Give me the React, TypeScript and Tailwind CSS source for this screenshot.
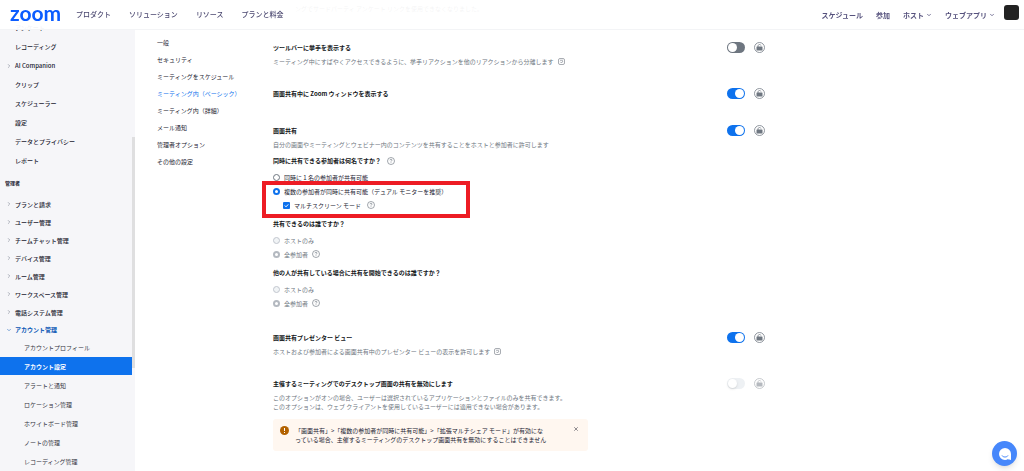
import clsx from 'clsx';
import { ChevronDown, ChevronRight, X } from 'lucide-react';
import type { ReactNode } from 'react';

const productLinks = ['プロダクト', 'ソリューション', 'リソース', 'プランと料金'];

const accountLinks = [
  { name: 'スケジュール' },
  { name: '参加' },
  { name: 'ホスト', menu: true },
  { name: 'ウェブアプリ', menu: true },
];

const personalLinks = [
  { name: 'アンケート' },
  { name: 'レコーディング' },
  { name: 'AI Companion', group: true },
  { name: 'クリップ' },
  { name: 'スケジューラー' },
  { name: '設定' },
  { name: 'データとプライバシー' },
  { name: 'レポート' },
];

const adminLinks = [
  'プランと請求',
  'ユーザー管理',
  'チームチャット管理',
  'デバイス管理',
  'ルーム管理',
  'ワークスペース管理',
  '電話システム管理',
];

const manageLinks = [
  'アカウントプロフィール',
  'アカウント設定',
  'アラートと通知',
  'ロケーション管理',
  'ホワイトボード管理',
  'ノートの管理',
  'レコーディング管理',
];

const sectionLinks = [
  '一般',
  'セキュリティ',
  'ミーティングをスケジュール',
  'ミーティング内（ベーシック）',
  'ミーティング内（詳細）',
  'メール通知',
  '管理者オプション',
  'その他の設定',
];

function Header() {
  return (
    <header className="fixed inset-x-0 top-0 z-10 flex h-[30px] items-center border-b border-gray-100 bg-white/95 pl-[10px] pr-[5px] text-[7px] leading-3">
      <a
        href="#"
        className="mr-4 w-[50px] pb-[3px] font-['Lato'] text-[21px] font-bold leading-6 text-[#0b5cff]"
      >
        zoom
      </a>
      <nav className="flex gap-[18px] pb-[2px] font-medium text-[#4b4870]">
        {productLinks.map((name) => (
          <a key={name} href="#">
            {name}
          </a>
        ))}
      </nav>
      <nav className="ml-auto flex gap-[13px] font-bold text-[#56527d]">
        {accountLinks.map((link) => (
          <a key={link.name} href="#" className="flex items-center gap-[2px]">
            {link.name}
            {link.menu && <ChevronDown className="size-[6px]" strokeWidth={3} />}
          </a>
        ))}
      </nav>
      <button
        type="button"
        aria-label="プロフィール"
        className="mb-1 ml-[9px] size-[15px] rounded-[3px] bg-[#222222]"
      />
    </header>
  );
}

function Sidebar() {
  return (
    <aside className="relative w-[135px] flex-none bg-[#f6f6f9] pt-[18px] font-medium text-[#222230]">
      <ul>
        {personalLinks.map((link) => (
          <li key={link.name} className="relative">
            <a href="#" className="flex h-[19px] items-center pl-[15px]">
              {link.group && (
                <ChevronRight className="absolute left-[6px] size-[6px] text-gray-500" />
              )}
              {link.name}
            </a>
          </li>
        ))}
      </ul>
      <h2 className="flex h-[25px] items-center pl-[5px] text-[5px] font-bold">
        管理者
      </h2>
      <ul>
        {adminLinks.map((name) => (
          <li key={name} className="relative">
            <a href="#" className="flex h-[18px] items-center pl-[15px]">
              <ChevronRight className="absolute left-[6px] size-[6px] text-gray-500" />
              {name}
            </a>
          </li>
        ))}
        <li className="relative">
          <a
            href="#"
            className="relative flex h-[17px] items-center pl-[15px] font-bold text-[#0956b5]"
          >
            <ChevronDown className="absolute left-[6px] size-[6px]" />
            アカウント管理
          </a>
          <ul className="flex flex-col gap-px">
            {manageLinks.map((name) => (
              <li key={name}>
                <a
                  href="#"
                  className={clsx(
                    'mr-[3px] flex h-[18px] items-center pl-6',
                    name === 'アカウント設定'
                      ? 'bg-[#0e72ed] font-bold text-white'
                      : 'font-normal text-[#333340]'
                  )}
                >
                  {name}
                </a>
              </li>
            ))}
          </ul>
        </li>
      </ul>
      <div className="absolute right-0 top-[137px] h-[231px] w-[3px] bg-[#dfdfe0]" />
    </aside>
  );
}

function SectionNav() {
  return (
    <nav className="w-[138px] flex-none pl-[22px] pt-[34px] text-[#222230]">
      {sectionLinks.map((name) => (
        <a
          key={name}
          href="#"
          className={clsx(
            'flex h-[17px] items-center whitespace-nowrap',
            name === 'ミーティング内（ベーシック）' && 'text-[#0e72ed]'
          )}
        >
          {name}
        </a>
      ))}
    </nav>
  );
}

function HelpIcon() {
  return (
    <svg viewBox="0 0 16 16" className="size-[8px] flex-none text-[#6e7680]">
      <circle cx="8" cy="8" r="7" fill="none" stroke="currentColor" strokeWidth="1.3" />
      <path
        d="M6 6.500c0-1.200.9-2 2-2s2 .8 2 1.800c0 1.400-2 1.500-2 2.900M8 10.500v1.300"
        fill="none"
        stroke="currentColor"
        strokeWidth="1.3"
      />
    </svg>
  );
}

function ModifiedIcon() {
  return (
    <svg
      viewBox="0 0 14 14"
      className="ml-1 inline size-[7px] align-[-1px] text-[#6e7680]"
      fill="none"
      stroke="currentColor"
      strokeWidth="1.2"
    >
      <rect x="1" y="1" width="12" height="12" rx="3" />
      <path d="M4 4.500h6M4.500 7.500l2.500 2.500 3-4" />
    </svg>
  );
}

function LockIcon() {
  return (
    <svg viewBox="0 0 22 22" className="size-[11px]">
      <circle cx="11" cy="11" r="10" fill="none" stroke="#6e7680" strokeWidth="1.5" />
      <rect x="5" y="9" width="12" height="8" rx="1" fill="#6e7680" />
      <path
        d="M8 10V8c0-1.800 1.300-3 3-3 1.500 0 2.600.8 2.900 2"
        fill="none"
        stroke="#6e7680"
        strokeWidth="1.5"
      />
    </svg>
  );
}

interface SettingProps {
  title: string;
  checked?: boolean;
  disabled?: boolean;
  className?: string;
  children?: ReactNode;
}

function Setting({ title, checked, disabled, className, children }: SettingProps) {
  return (
    <section className={clsx('flex items-start justify-between', className)}>
      <div>
        <h3 className="font-bold leading-3 text-[#131619]">{title}</h3>
        {children}
      </div>
      <div className="flex gap-[9px]">
        <input
          type="checkbox"
          role="switch"
          aria-label={title}
          defaultChecked={checked}
          disabled={disabled}
          className="flex h-[11px] w-[18px] appearance-none items-center rounded-full bg-[#6e7680] p-px before:size-[9px] before:rounded-full before:bg-white checked:justify-end checked:bg-[#0e72ed] disabled:bg-[#eef1f4] disabled:before:shadow-sm"
        />
        <button
          type="button"
          aria-label="ロック"
          disabled={disabled}
          className="disabled:opacity-50"
        >
          <LockIcon />
        </button>
      </div>
    </section>
  );
}

function Description({ children }: { children: ReactNode }) {
  return <p className="mt-[3px] leading-[9px] text-[#6e7680]">{children}</p>;
}

interface OptionProps {
  name: string;
  label: string;
  checked?: boolean;
  disabled?: boolean;
  help?: boolean;
}

function Option({ name, label, checked, disabled, help }: OptionProps) {
  return (
    <div className="flex h-[14px] items-center gap-1">
      <label
        className={clsx(
          'flex items-center gap-1',
          disabled ? 'text-[#6e7680]' : 'text-[#222230]'
        )}
      >
        <input
          type="radio"
          name={name}
          defaultChecked={checked}
          disabled={disabled}
          className="size-[7px] appearance-none rounded-full border border-[#6e7680] bg-white checked:border-2 checked:border-[#0e72ed] disabled:border-[#c1c6ce] disabled:bg-[#f1f4f6] disabled:checked:border-[#b4b9c0] disabled:checked:bg-white"
        />
        {label}
      </label>
      {help && <HelpIcon />}
    </div>
  );
}

interface QuestionProps {
  title: string;
  help?: boolean;
  children: ReactNode;
}

function Question({ title, help, children }: QuestionProps) {
  return (
    <fieldset className="mt-[6px]">
      <legend className="flex items-center gap-[6px] font-bold leading-3 text-[#131619]">
        {title}
        {help && <HelpIcon />}
      </legend>
      <div className="mt-[3px]">{children}</div>
    </fieldset>
  );
}

function Settings() {
  return (
    <main className="flex min-w-0 max-w-[492px] flex-1 flex-col gap-[22px] pt-1">
      <p className="pb-[7px] pl-[22px] leading-[9px] text-[#222230]">
        ングでサードパーティ アンケート リンクを使用できなくなりました。
      </p>
      <Setting title="ツールバーに挙手を表示する">
        <Description>
          ミーティング中にすばやくアクセスできるように、挙手リアクションを他のリアクションから分離します
          <ModifiedIcon />
        </Description>
      </Setting>
      <Setting
        title="画面共有中に Zoom ウィンドウを表示する"
        checked
        className="pb-[3px]"
      />
      <Setting title="画面共有" checked>
        <Description>
          自分の画面やミーティングとウェビナー内のコンテンツを共有することをホストと参加者に許可します
        </Description>
        <Question title="同時に共有できる参加者は何名ですか？" help>
          <Option name="count" label="同時に 1 名の参加者が共有可能" />
          <div className="relative">
            <Option
              name="count"
              label="複数の参加者が同時に共有可能（デュアル モニターを推奨）"
              checked
            />
            <div className="flex h-[14px] items-center gap-[6px] pl-[10px]">
              <label className="flex items-center gap-1 text-[#222230]">
                <span className="grid">
                  <input
                    type="checkbox"
                    defaultChecked
                    className="col-start-1 row-start-1 size-[7px] appearance-none rounded-[1px] bg-[#0e72ed]"
                  />
                  <svg
                    viewBox="0 0 14 14"
                    className="pointer-events-none col-start-1 row-start-1 size-[7px]"
                  >
                    <path
                      d="M3.500 7l2.500 2.600 4.500-4.800"
                      fill="none"
                      stroke="white"
                      strokeWidth="2"
                    />
                  </svg>
                </span>
                マルチスクリーン モード
              </label>
              <HelpIcon />
            </div>
            <div className="pointer-events-none absolute -bottom-[6px] -left-[11px] -top-[3px] w-[208px] border-4 border-[#ed1c24]" />
          </div>
        </Question>
        <Question title="共有できるのは誰ですか？">
          <Option name="share" label="ホストのみ" disabled />
          <Option name="share" label="全参加者" checked disabled help />
        </Question>
        <Question title="他の人が共有している場合に共有を開始できるのは誰ですか？">
          <Option name="start" label="ホストのみ" disabled />
          <Option name="start" label="全参加者" checked disabled help />
        </Question>
      </Setting>
      <Setting title="画面共有プレゼンター ビュー" checked>
        <Description>
          ホストおよび参加者による画面共有中のプレゼンター ビューの表示を許可します
          <ModifiedIcon />
        </Description>
      </Setting>
      <Setting
        title="主催するミーティングでのデスクトップ画面の共有を無効にします"
        disabled
      >
        <Description>
          このオプションがオンの場合、ユーザーは選択されているアプリケーションとファイルのみを共有できます。
          <br />
          このオプションは、ウェブ クライアントを使用しているユーザーには適用できない場合があります。
        </Description>
        <div className="mt-2 flex w-[315px] items-start rounded-[3px] bg-[#fff7f0] px-[7px] py-[7px] leading-[9px] text-[#222230]">
          <svg viewBox="0 0 18 18" className="size-[9px] flex-none">
            <circle cx="9" cy="9" r="9" fill="#b36200" />
            <path d="M9 4v6M9 12v2" stroke="white" strokeWidth="2" />
          </svg>
          <p className="ml-[6px] flex-1">
            「画面共有」&gt;「複数の参加者が同時に共有可能」&gt;「拡張マルチシェア モード」が有効にな
            <br />
            っている場合、主催するミーティングのデスクトップ画面共有を無効にすることはできません
          </p>
          <button type="button" aria-label="閉じる" className="pr-[2px]">
            <X className="size-[6px]" />
          </button>
        </div>
      </Setting>
    </main>
  );
}

export default function App() {
  return (
    <div className="min-h-screen bg-white font-['Noto_Sans_CJK_JP',sans-serif] text-[6px]">
      <Header />
      <div className="flex min-h-screen">
        <Sidebar />
        <SectionNav />
        <Settings />
      </div>
      <button
        type="button"
        aria-label="チャット"
        className="fixed bottom-[5px] right-[7px] grid size-[25px] place-items-center rounded-full bg-[#4687fb] shadow-md"
      >
        <svg viewBox="0 0 24 24" className="size-3">
          <path
            d="M12 0a12 12 0 1 0 0 24c2.500 0 4.500-.7 6-1.800 1.200 1.300 3.500 1.800 6 1.800V12A12 12 0 0 0 12 0z"
            fill="white"
          />
          <path d="M6 15c2 4 10 4 12 0" fill="none" stroke="#4687fb" strokeWidth="2" />
        </svg>
      </button>
    </div>
  );
}
